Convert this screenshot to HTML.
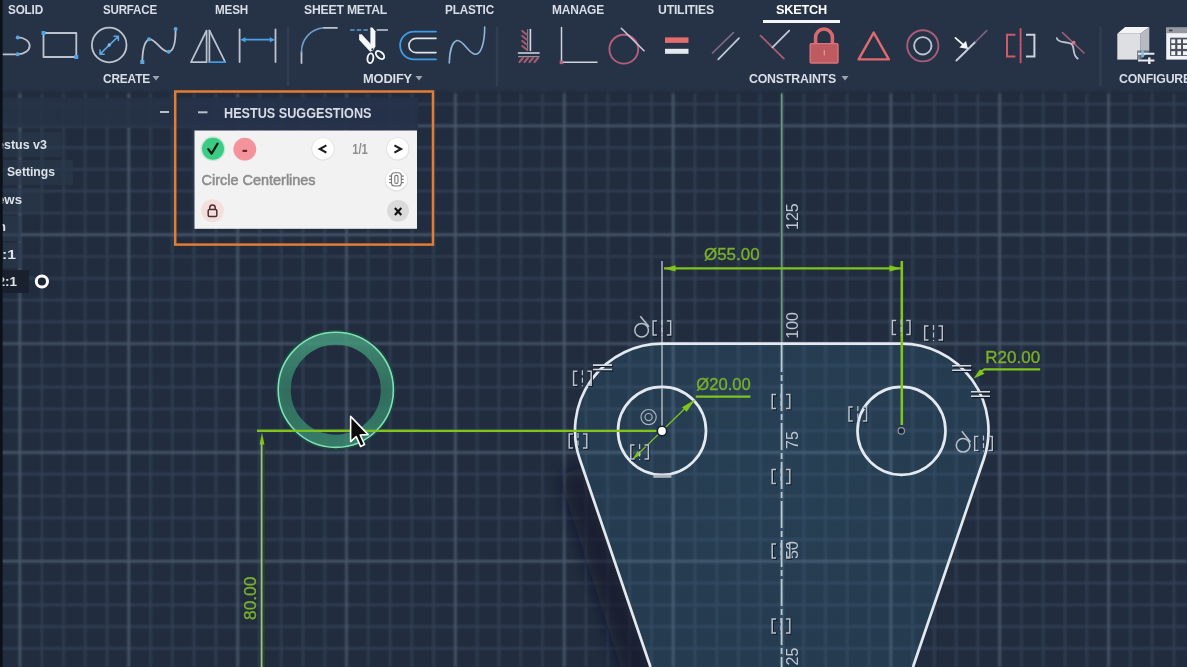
<!DOCTYPE html>
<html><head><meta charset="utf-8">
<style>
html,body{margin:0;padding:0;background:#212d3e;overflow:hidden}
body{width:1187px;height:667px;position:relative;font-family:"Liberation Sans",sans-serif}
svg{position:absolute;left:0;top:0;filter:blur(0.45px)}
.gm{stroke:#313f54;stroke-width:2.2}
.gM{stroke:#4a586d;stroke-width:2.4}
text{font-family:"Liberation Sans",sans-serif}
.tab{font-size:13.2px;font-weight:bold;fill:#d9dee6;letter-spacing:-0.2px}
.grp{font-size:13.2px;font-weight:bold;fill:#d9dee6;letter-spacing:-0.2px}
</style></head><body>
<svg width="1187" height="667" viewBox="0 0 1187 667">
<defs>
<radialGradient id="shapeg" gradientUnits="userSpaceOnUse" cx="782" cy="470" r="330">
<stop offset="0" stop-color="#3b7e9e" stop-opacity="0.23"/><stop offset="1" stop-color="#36799a" stop-opacity="0.16"/>
</radialGradient>
<filter id="b1" filterUnits="userSpaceOnUse" x="0" y="0" width="1187" height="667"><feGaussianBlur stdDeviation="0.85"/></filter>

<g id="gsym">
<g fill="none" stroke="#111a26" stroke-width="1.4" transform="translate(1,1)"><path d="M-5 -7 L-8.8 -7 L-8.8 7 L-5 7 M5 -7 L8.8 -7 L8.8 7 L5 7"/></g>
<g fill="none" stroke="#b9c0ca" stroke-width="1.5"><path d="M-5 -7 L-8.8 -7 L-8.8 7 L-5 7 M5 -7 L8.8 -7 L8.8 7 L5 7"/><path d="M0 -8 L0 8" stroke-dasharray="5 2.5" stroke-width="1.2"/></g>
</g>
<g id="geq">
<g fill="none" stroke="#111a26" stroke-width="1.6" transform="translate(1,1.2)"><path d="M-9.5 -2.2 L9.5 -2.2 M-9.5 2.2 L9.5 2.2"/></g>
<g fill="none" stroke="#d5dae1" stroke-width="1.6"><path d="M-9.5 -2.2 L9.5 -2.2 M-9.5 2.2 L9.5 2.2"/></g>
</g>
<g id="gtan" fill="none" stroke="#b9c0ca" stroke-width="1.5">
<circle cx="0" cy="0" r="6.8"/><path d="M-1.3 -14 L7.4 -3.4"/>
</g>
<linearGradient id="ringg" gradientUnits="userSpaceOnUse" x1="0" y1="331" x2="0" y2="448"><stop offset="0" stop-color="#4aa684"/><stop offset="0.5" stop-color="#357f66"/><stop offset="1" stop-color="#3c9374"/></linearGradient>
<linearGradient id="tbfade" x1="0" y1="0" x2="0" y2="1"><stop offset="0" stop-color="#263347"/><stop offset="0.5" stop-color="#222e42" stop-opacity="0.8"/><stop offset="1" stop-color="#1c2636" stop-opacity="0"/></linearGradient>
<linearGradient id="shl" gradientUnits="userSpaceOnUse" x1="615" y1="563" x2="571.4" y2="577.8"><stop offset="0" stop-color="#121a26" stop-opacity="0.55"/><stop offset="0.5" stop-color="#121a26" stop-opacity="0.3"/><stop offset="1" stop-color="#121a26" stop-opacity="0"/></linearGradient>
<filter id="b4" filterUnits="userSpaceOnUse" x="460" y="380" width="260" height="360"><feGaussianBlur stdDeviation="9"/></filter>
<clipPath id="shclip"><path d="M575 431 L579.64 458.74 L650.5 667 L400 667 L400 400 L575 400 Z"/></clipPath>
</defs>
<rect x="0" y="0" width="1187" height="667" fill="#212d3e"/>
<!-- shape fill -->
<g id="grid" filter="url(#b1)">
<line x1="-1.8" y1="88" x2="-1.8" y2="667" class="gm"/>
<line x1="41.7" y1="88" x2="41.7" y2="667" class="gm"/>
<line x1="63.5" y1="88" x2="63.5" y2="667" class="gm"/>
<line x1="85.3" y1="88" x2="85.3" y2="667" class="gm"/>
<line x1="107.0" y1="88" x2="107.0" y2="667" class="gm"/>
<line x1="150.6" y1="88" x2="150.6" y2="667" class="gm"/>
<line x1="172.3" y1="88" x2="172.3" y2="667" class="gm"/>
<line x1="194.1" y1="88" x2="194.1" y2="667" class="gm"/>
<line x1="215.9" y1="88" x2="215.9" y2="667" class="gm"/>
<line x1="259.4" y1="88" x2="259.4" y2="667" class="gm"/>
<line x1="281.2" y1="88" x2="281.2" y2="667" class="gm"/>
<line x1="303.0" y1="88" x2="303.0" y2="667" class="gm"/>
<line x1="324.8" y1="88" x2="324.8" y2="667" class="gm"/>
<line x1="368.3" y1="88" x2="368.3" y2="667" class="gm"/>
<line x1="390.1" y1="88" x2="390.1" y2="667" class="gm"/>
<line x1="411.8" y1="88" x2="411.8" y2="667" class="gm"/>
<line x1="433.6" y1="88" x2="433.6" y2="667" class="gm"/>
<line x1="477.2" y1="88" x2="477.2" y2="667" class="gm"/>
<line x1="498.9" y1="88" x2="498.9" y2="667" class="gm"/>
<line x1="520.7" y1="88" x2="520.7" y2="667" class="gm"/>
<line x1="542.5" y1="88" x2="542.5" y2="667" class="gm"/>
<line x1="586.0" y1="88" x2="586.0" y2="667" class="gm"/>
<line x1="607.8" y1="88" x2="607.8" y2="667" class="gm"/>
<line x1="629.6" y1="88" x2="629.6" y2="667" class="gm"/>
<line x1="651.4" y1="88" x2="651.4" y2="667" class="gm"/>
<line x1="694.9" y1="88" x2="694.9" y2="667" class="gm"/>
<line x1="716.7" y1="88" x2="716.7" y2="667" class="gm"/>
<line x1="738.4" y1="88" x2="738.4" y2="667" class="gm"/>
<line x1="760.2" y1="88" x2="760.2" y2="667" class="gm"/>
<line x1="803.8" y1="88" x2="803.8" y2="667" class="gm"/>
<line x1="825.5" y1="88" x2="825.5" y2="667" class="gm"/>
<line x1="847.3" y1="88" x2="847.3" y2="667" class="gm"/>
<line x1="869.1" y1="88" x2="869.1" y2="667" class="gm"/>
<line x1="912.6" y1="88" x2="912.6" y2="667" class="gm"/>
<line x1="934.4" y1="88" x2="934.4" y2="667" class="gm"/>
<line x1="956.2" y1="88" x2="956.2" y2="667" class="gm"/>
<line x1="977.9" y1="88" x2="977.9" y2="667" class="gm"/>
<line x1="1021.5" y1="88" x2="1021.5" y2="667" class="gm"/>
<line x1="1043.3" y1="88" x2="1043.3" y2="667" class="gm"/>
<line x1="1065.0" y1="88" x2="1065.0" y2="667" class="gm"/>
<line x1="1086.8" y1="88" x2="1086.8" y2="667" class="gm"/>
<line x1="1130.4" y1="88" x2="1130.4" y2="667" class="gm"/>
<line x1="1152.1" y1="88" x2="1152.1" y2="667" class="gm"/>
<line x1="1173.9" y1="88" x2="1173.9" y2="667" class="gm"/>
<line x1="0" y1="104.1" x2="1187" y2="104.1" class="gm"/>
<line x1="0" y1="147.6" x2="1187" y2="147.6" class="gm"/>
<line x1="0" y1="169.4" x2="1187" y2="169.4" class="gm"/>
<line x1="0" y1="191.2" x2="1187" y2="191.2" class="gm"/>
<line x1="0" y1="213.0" x2="1187" y2="213.0" class="gm"/>
<line x1="0" y1="256.5" x2="1187" y2="256.5" class="gm"/>
<line x1="0" y1="278.3" x2="1187" y2="278.3" class="gm"/>
<line x1="0" y1="300.1" x2="1187" y2="300.1" class="gm"/>
<line x1="0" y1="321.8" x2="1187" y2="321.8" class="gm"/>
<line x1="0" y1="365.4" x2="1187" y2="365.4" class="gm"/>
<line x1="0" y1="387.1" x2="1187" y2="387.1" class="gm"/>
<line x1="0" y1="408.9" x2="1187" y2="408.9" class="gm"/>
<line x1="0" y1="430.7" x2="1187" y2="430.7" class="gm"/>
<line x1="0" y1="474.2" x2="1187" y2="474.2" class="gm"/>
<line x1="0" y1="496.0" x2="1187" y2="496.0" class="gm"/>
<line x1="0" y1="517.8" x2="1187" y2="517.8" class="gm"/>
<line x1="0" y1="539.6" x2="1187" y2="539.6" class="gm"/>
<line x1="0" y1="583.1" x2="1187" y2="583.1" class="gm"/>
<line x1="0" y1="604.9" x2="1187" y2="604.9" class="gm"/>
<line x1="0" y1="626.6" x2="1187" y2="626.6" class="gm"/>
<line x1="0" y1="648.4" x2="1187" y2="648.4" class="gm"/>
<line x1="19.9" y1="88" x2="19.9" y2="667" class="gM"/>
<line x1="128.8" y1="88" x2="128.8" y2="667" class="gM"/>
<line x1="237.7" y1="88" x2="237.7" y2="667" class="gM"/>
<line x1="346.5" y1="88" x2="346.5" y2="667" class="gM"/>
<line x1="455.4" y1="88" x2="455.4" y2="667" class="gM"/>
<line x1="564.3" y1="88" x2="564.3" y2="667" class="gM"/>
<line x1="673.1" y1="88" x2="673.1" y2="667" class="gM"/>
<line x1="782.0" y1="88" x2="782.0" y2="667" class="gM"/>
<line x1="890.9" y1="88" x2="890.9" y2="667" class="gM"/>
<line x1="999.7" y1="88" x2="999.7" y2="667" class="gM"/>
<line x1="1108.6" y1="88" x2="1108.6" y2="667" class="gM"/>
<line x1="0" y1="125.9" x2="1187" y2="125.9" class="gM"/>
<line x1="0" y1="234.7" x2="1187" y2="234.7" class="gM"/>
<line x1="0" y1="343.6" x2="1187" y2="343.6" class="gM"/>
<line x1="0" y1="452.5" x2="1187" y2="452.5" class="gM"/>
<line x1="0" y1="561.3" x2="1187" y2="561.3" class="gM"/>
</g>
<path id="shape" d="M662 343.7 L901.5 343.7 A87 87 0 0 1 984 458.5 L913.5 667 L651 667 L579.4 458.5 A87 87 0 0 1 662 343.7 Z" fill="url(#shapeg)"/>

<g clip-path="url(#shclip)"><path d="M584 462 L662 690 L628 690 L560 478 Z" fill="#0f1622" fill-opacity="0.62" filter="url(#b4)"/></g>
<!-- axis -->
<line x1="780.8" y1="93" x2="780.8" y2="343" stroke="#2a5a3c" stroke-width="1.2"/>
<line x1="781.8" y1="93" x2="781.8" y2="343" stroke="#86b292" stroke-width="1.1"/>
<line x1="781.6" y1="345" x2="781.6" y2="667" stroke="#b9ccd2" stroke-width="1.8" stroke-dasharray="27 3 6 3"/>
<!-- axis labels -->
<g font-size="16px" fill="#c0c6cf" text-anchor="middle">
<text transform="translate(798.4 216.6) rotate(-90)">125</text>
<text transform="translate(798.4 325.4) rotate(-90)">100</text>
<text transform="translate(798.4 440) rotate(-90)">75</text>
<text transform="translate(798.4 550) rotate(-90)">50</text>
<text transform="translate(798.4 656.5) rotate(-90)">25</text>
</g>
<!-- extension line left white -->
<line x1="662" y1="261" x2="662" y2="431" stroke="#cfd6de" stroke-width="1.2"/>
<!-- outline -->
<path d="M650.5 667 L579.64 458.74 A87 87 0 0 1 662 343.7 L901.5 343.7 A87 87 0 0 1 983.86 458.74 L913 667" fill="none" stroke="#e4e9f0" stroke-width="2.7"/>
<circle cx="662" cy="430.8" r="44" fill="none" stroke="#e4e9f0" stroke-width="2.7"/>
<circle cx="901.5" cy="430.8" r="44" fill="none" stroke="#e4e9f0" stroke-width="2.7"/>
<!-- green dims -->
<g stroke="#80c41c" fill="none">
<line x1="257" y1="430.8" x2="657" y2="430.8" stroke-width="2.2"/>
<line x1="263.6" y1="444" x2="263.6" y2="667" stroke="#2f4d22" stroke-width="2.6" stroke-opacity="0.65"/><line x1="261.6" y1="440" x2="261.6" y2="667" stroke="#a2c383" stroke-width="1.8"/>
<line x1="664" y1="268.4" x2="901" y2="268.4" stroke-width="2.4"/>
<line x1="901.8" y1="261" x2="901.8" y2="425" stroke-width="2.6"/>
<line x1="695.8" y1="396.6" x2="750.5" y2="396.6" stroke-width="2.4"/>
<line x1="984" y1="369.3" x2="1040.2" y2="369.3" stroke-width="2.2"/>
<line x1="633.4" y1="458.6" x2="688" y2="405.5" stroke-width="1.3"/>
<line x1="984" y1="369.3" x2="979" y2="373.5" stroke-width="2"/>
</g>
<g fill="#80c41c" stroke="none">
<path d="M262 432.6 L259.6 444.5 L264.4 444.5 Z"/>
<path d="M664 268.4 L675.5 265.2 L675.5 271.6 Z"/>
<path d="M901 268.4 L889.5 265.2 L889.5 271.6 Z"/>
<path d="M695.6 399.2 L682 407.2 L686.6 411.8 Z"/>
<path d="M632.8 459.2 L641.2 454.6 L637.6 451 Z"/>
<path d="M973.6 378.6 L984.6 373.8 L980 369.2 Z"/>
</g>
<g font-size="16.8px" fill="#7ab02a" stroke="#7ab02a" stroke-width="0.35">
<text x="704" y="260.4" textLength="55.6" lengthAdjust="spacingAndGlyphs">Ø55.00</text>
<text x="696.3" y="390.2" textLength="54.4" lengthAdjust="spacingAndGlyphs">Ø20.00</text>
<text x="985.3" y="363.2" textLength="54.8" lengthAdjust="spacingAndGlyphs">R20.00</text>
<text transform="translate(255.6 598.3) rotate(-90)" text-anchor="middle" font-size="16.8px" textLength="43.4" lengthAdjust="spacingAndGlyphs">80.00</text>
</g>
<!-- center points -->
<circle cx="662" cy="431" r="5.6" fill="#16202e"/>
<circle cx="662" cy="431" r="3.9" fill="#ffffff"/>
<circle cx="901.3" cy="430.9" r="3.2" fill="#1b2532" stroke="#8e98a6" stroke-width="1.2"/>
<!-- glyphs -->
<use href="#gsym" x="661.9" y="328"/><use href="#gtan" x="641.6" y="330.2"/>
<use href="#gsym" x="901.2" y="327.4"/><use href="#gsym" x="933.5" y="333"/>
<use href="#gsym" x="582.4" y="378.2"/><use href="#geq" x="602.5" y="367.3"/>
<use href="#gsym" x="781" y="401.5"/><use href="#gsym" x="857.8" y="414"/>
<use href="#gsym" x="578" y="441"/><use href="#gsym" x="639.6" y="452"/>
<use href="#gsym" x="781" y="476.5"/><use href="#gsym" x="781" y="551"/><use href="#gsym" x="781" y="626"/>
<use href="#gsym" x="983.5" y="443.4"/><use href="#gtan" x="963.1" y="445.3"/>
<use href="#geq" x="961.7" y="368"/><use href="#geq" x="980.5" y="394"/>
<line x1="653.3" y1="476.3" x2="671.4" y2="476.3" stroke="#aeb5be" stroke-width="3"/>
<g fill="none" stroke="#aab2bd" stroke-width="1.2"><circle cx="648.6" cy="417.1" r="7.6"/><circle cx="648.6" cy="417.1" r="3.6"/></g>
<!-- preview ring -->
<circle cx="335.8" cy="389.8" r="59.3" fill="none" stroke="#1d4a40" stroke-width="1.6" stroke-opacity="0.8"/>
<circle cx="335.8" cy="389.8" r="51.5" fill="none" stroke="url(#ringg)" stroke-width="13" stroke-opacity="0.78"/>
<circle cx="335.8" cy="389.8" r="57.6" fill="none" stroke="#7fe0b6" stroke-width="1.6"/>
<line x1="257" y1="430.8" x2="420" y2="430.8" stroke="#80c41c" stroke-width="2.2" stroke-opacity="0.85"/>
<!-- cursor -->
<path d="M350.6 416.4 L350.6 441.6 L356.2 436.6 L360.6 446.4 L364.6 444.6 L360.2 435 L368.2 434.6 Z" fill="#0a0a0a" stroke="#ffffff" stroke-width="1.6" stroke-linejoin="round"/>

<!-- toolbar -->
<rect x="0" y="0" width="1187" height="89" fill="#263347"/><rect x="0" y="89" width="1187" height="6" fill="url(#tbfade)"/>

<!-- tab labels -->
<g class="tab">
<text x="8" y="14" textLength="35" lengthAdjust="spacingAndGlyphs">SOLID</text>
<text x="103" y="14" textLength="54" lengthAdjust="spacingAndGlyphs">SURFACE</text>
<text x="215" y="14" textLength="33" lengthAdjust="spacingAndGlyphs">MESH</text>
<text x="304" y="14" textLength="83" lengthAdjust="spacingAndGlyphs">SHEET METAL</text>
<text x="445" y="14" textLength="49" lengthAdjust="spacingAndGlyphs">PLASTIC</text>
<text x="552" y="14" textLength="52" lengthAdjust="spacingAndGlyphs">MANAGE</text>
<text x="658" y="14" textLength="56" lengthAdjust="spacingAndGlyphs">UTILITIES</text>
<text x="776" y="14" textLength="51" lengthAdjust="spacingAndGlyphs" fill="#ffffff">SKETCH</text>
</g>
<rect x="763" y="20" width="77" height="3" fill="#f4f6f8"/>
<g class="grp">
<text x="103" y="83" textLength="47" lengthAdjust="spacingAndGlyphs">CREATE</text>
<text x="363" y="83" textLength="49" lengthAdjust="spacingAndGlyphs">MODIFY</text>
<text x="749" y="83" textLength="87" lengthAdjust="spacingAndGlyphs">CONSTRAINTS</text>
<text x="1119" y="83" textLength="72" lengthAdjust="spacingAndGlyphs">CONFIGURE</text>
</g>
<g fill="#9aa3af">
<path d="M152.5 76 L159.5 76 L156 80.5 Z"/>
<path d="M415.5 76 L422.5 76 L419 80.5 Z"/>
<path d="M841.5 76 L848.5 76 L845 80.5 Z"/>
</g>
<g stroke="#303e54" stroke-width="2.4">
<line x1="288" y1="27" x2="288" y2="86"/>
<line x1="497" y1="27" x2="497" y2="86"/>
<line x1="1100.5" y1="27" x2="1100.5" y2="86"/>
</g>

<g id="icons" fill="none" stroke-linecap="round" stroke-linejoin="round">
<!-- 1 line/arc -->
<path d="M3 54.3 L17.7 54.3 A12 8.45 0 0 0 17.7 37.4" stroke="#bcc3ce" stroke-width="1.8"/>
<circle cx="17.7" cy="37.4" r="2" fill="#5aa7e0" stroke="none"/><circle cx="17.7" cy="54.3" r="2" fill="#5aa7e0" stroke="none"/>
<!-- 2 rectangle -->
<rect x="43.5" y="33" width="32.8" height="24" stroke="#bcc3ce" stroke-width="1.8"/>
<rect x="41.5" y="31" width="4" height="4" fill="#4aa3e6" stroke="none"/><rect x="74.3" y="55" width="4" height="4" fill="#4aa3e6" stroke="none"/>
<!-- 3 circle -->
<circle cx="109.2" cy="45" r="17.3" stroke="#bcc3ce" stroke-width="1.8"/>
<path d="M100.5 53.6 L118 36.6 M100 50 L100 54.2 L104.2 54.2 M114 36.2 L118.4 36.2 L118.4 40.4" stroke="#5aa7e0" stroke-width="1.5"/>
<circle cx="109.2" cy="45" r="1.7" fill="#7fbdf0" stroke="none"/>
<!-- 4 spline -->
<path d="M142.3 61 C142.6 50 145 41 149 39.4 C155 37.5 161 52.5 168.8 51.8 C174 51 175.6 40 175.6 29.5" stroke="#bcc3ce" stroke-width="1.8"/>
<g fill="#5aa7e0" stroke="none"><rect x="140.3" y="60" width="4" height="4"/><circle cx="149" cy="39.3" r="2"/><circle cx="168.8" cy="51.8" r="2"/><circle cx="175.6" cy="29" r="2"/></g>
<!-- 5 mirror -->
<path d="M206.6 30.5 L191 62.2 L206.6 62.2 Z" stroke="#bcc3ce" stroke-width="1.7"/>
<path d="M209.4 30.5 L225.2 62.2" stroke="#bcc3ce" stroke-width="1.7"/>
<path d="M209.4 30.5 L209.4 62.2" stroke="#bcc3ce" stroke-width="1.7"/>
<path d="M209.4 62.2 L225.2 62.2" stroke="#3f9be3" stroke-width="1.8"/>
<!-- 6 dimension -->
<path d="M239.6 29.3 L239.6 62 M275.5 29.3 L275.5 62" stroke="#bcc3ce" stroke-width="1.8"/>
<path d="M242 39.7 L273.5 39.7" stroke="#4aa3e6" stroke-width="1.8"/>
<path d="M241 39.7 L245.5 37 L245.5 42.4 Z M274.3 39.7 L269.8 37 L269.8 42.4 Z" fill="#4aa3e6" stroke="none"/>
<!-- 7 fillet -->
<path d="M301.5 63 L301.5 52" stroke="#bcc3ce" stroke-width="1.8"/>
<path d="M301.5 52 A24 24 0 0 1 324 27.8" stroke="#6f9fc8" stroke-width="1.6"/>
<path d="M324 27.8 L337 27.8" stroke="#bcc3ce" stroke-width="1.8"/>
<!-- 8 trim -->
<path d="M350.2 30 L369 30" stroke="#5aa0d4" stroke-width="1.5" stroke-dasharray="4.4 2.2" stroke-linecap="butt"/>
<path d="M377.2 30 L387.4 30" stroke="#c9d0da" stroke-width="1.4"/>
<g stroke="none" fill="#f6f7f9">
<path d="M359.1 34.2 L361.6 34.2 L371.2 44.6 L374.2 49.4 L370.2 51.8 L359.1 39.8 Z"/>
<path d="M370.4 27.4 L372.4 27.4 L375.4 31.2 L375.4 46.4 L372.6 51.2 L370.4 47 Z"/>
</g>
<circle cx="372.4" cy="49.4" r="1.1" fill="#263347" stroke="none"/>
<ellipse cx="370.4" cy="58.2" rx="2.9" ry="4.9" transform="rotate(8 370.4 58.2)" stroke="#f6f7f9" stroke-width="1.9"/>
<ellipse cx="380" cy="55" rx="3" ry="4.9" transform="rotate(-48 380 55)" stroke="#f6f7f9" stroke-width="1.9"/>
<!-- 9 offset -->
<path d="M436 31.6 L414 31.6 A13.9 13.9 0 0 0 414 59.4 L436 59.4" stroke="#3f9be3" stroke-width="1.8"/>
<path d="M436 38.4 L416 38.4 A7.1 7.1 0 0 0 416 52.6 L436 52.6" stroke="#dfe4ea" stroke-width="1.6"/>
<!-- 10 spline -->
<path d="M449.3 63 C449.5 52 452 42 457 40.5 C463 39 469 55 476 54.3 C482 53.5 484.7 40 484.7 27" stroke="#8fb4d6" stroke-width="1.6"/>
<!-- 11 fix -->
<path d="M527.6 29.5 L527.6 50.5" stroke="#8a7a8c" stroke-width="1.2"/><path d="M530.4 29.5 L530.4 50.5" stroke="#d7dce3" stroke-width="1.6"/>
<path d="M518.5 53 L539 53" stroke="#d7dce3" stroke-width="1.6"/><path d="M518.5 56.6 L539 56.6" stroke="#9a8c9c" stroke-width="1.1"/>
<path d="M522.3 31 L526.6 34.5 M522.3 36 L526.6 39.5 M522.3 41 L526.6 44.5 M522.3 46 L526.6 49.5" stroke="#a35a70" stroke-width="2.2"/>
<path d="M519.5 62 L523 58 M524.5 62 L528 58 M529.5 62 L533 58 M534.5 62 L538 58" stroke="#a35a70" stroke-width="2.2"/>
<!-- 12 horiz/vert -->
<path d="M561.5 27.5 L561.5 62.3 L597 62.3" stroke="#cfd4dc" stroke-width="1.5"/>
<rect x="559.7" y="60.5" width="3.6" height="3.6" fill="#c0607e" stroke="none"/>
<!-- 13 tangent -->
<circle cx="623.8" cy="49.2" r="14.4" stroke="#b25f78" stroke-width="1.9"/>
<path d="M621.3 28.3 L644 50.8" stroke="#cdc8d6" stroke-width="1.6"/>
<!-- 14 equal -->
<rect x="665" y="37.4" width="23.5" height="5.5" fill="#e46c6c" stroke="none"/>
<rect x="665" y="48.8" width="23.5" height="5" fill="#e3e8ef" stroke="none"/>
<!-- 15 parallel -->
<path d="M712.5 53 L733.4 32.7" stroke="#806884" stroke-width="1.7"/>
<path d="M718.2 59.3 L739 38.2" stroke="#c6cad8" stroke-width="1.7"/>
<!-- 16 perpendicular -->
<path d="M760.5 35.6 L783.9 58.6" stroke="#ac5c74" stroke-width="1.8"/>
<path d="M772.5 47.3 L789.2 30.6" stroke="#c6cad8" stroke-width="1.7"/>
<!-- 17 lock -->
<path d="M815.6 43 L815.6 37.4 A8.4 8.4 0 0 1 832.4 37.4 L832.4 43" stroke="#d8696e" stroke-width="3.6"/>
<rect x="810.2" y="43.6" width="27.8" height="19.4" rx="1" fill="#be5b61" stroke="#dc7378" stroke-width="1.4"/>
<path d="M824.3 50.5 L824.3 55" stroke="#e89a9a" stroke-width="1.2"/>
<!-- 18 triangle -->
<path d="M873.7 32.6 L858.6 59.4 L888.8 59.4 Z" stroke="#df6a70" stroke-width="2.4"/>
<!-- 19 concentric -->
<circle cx="922.8" cy="45.8" r="15.6" stroke="#a95c78" stroke-width="1.9"/>
<circle cx="922.8" cy="45.8" r="8.7" stroke="#bcc4d0" stroke-width="1.9"/>
<!-- 20 midpoint -->
<path d="M956.4 60.5 L975.3 42" stroke="#c9cedb" stroke-width="1.9"/>
<path d="M975.3 42 L986.7 30.6" stroke="#7d6480" stroke-width="1.5"/>
<path d="M955.4 37.8 L963.5 45" stroke="#f3f5f7" stroke-width="1.7"/>
<path d="M968 49 L959.4 47.6 L966 41 Z" fill="#f3f5f7" stroke="none"/>
<!-- 21 symmetric -->
<path d="M1015.4 34.7 L1007 34.7 L1007 56.6 L1015.4 56.6" stroke="#cf5966" stroke-width="2" stroke-linecap="butt" stroke-linejoin="miter"/>
<path d="M1020.6 29 L1020.6 62.4" stroke="#c9566a" stroke-width="1.9" stroke-dasharray="13 1.4 2.4 1.4"/>
<path d="M1026 34.7 L1034.4 34.7 L1034.4 56.6 L1026 56.6" stroke="#cdd2dc" stroke-width="2" stroke-linecap="butt" stroke-linejoin="miter"/>
<!-- 22 curvature -->
<path d="M1056.8 38.2 C1058.5 43.5 1066 41.2 1071 43.8 C1075.4 46 1071.6 55 1077.7 58.6" stroke="#bcc4d0" stroke-width="1.8"/>
<path d="M1062.5 32.7 L1084 53" stroke="#9c5e78" stroke-width="1.6"/>
<circle cx="1073.6" cy="42.6" r="1.9" fill="#d9788c" stroke="none"/>
<!-- 23 cube -->
<g stroke="none">
<path d="M1117.3 33.8 L1125.1 27 L1149.3 27 L1140.3 33.8 Z" fill="#f3f4f6"/>
<path d="M1140.3 33.8 L1149.3 27 L1149.3 52 L1140.3 59.6 Z" fill="#b7bac0"/>
<path d="M1117.3 33.8 L1140.3 33.8 L1140.3 59.6 L1117.3 59.6 Z" fill="#dddfe3"/>
<rect x="1137" y="50.5" width="18" height="13" fill="#263347" fill-opacity="0.55"/>
</g>
<path d="M1138 53.8 L1154.4 53.8 M1138 60.5 L1154.4 60.5" stroke="#e8ebef" stroke-width="1.9" stroke-linecap="butt"/>
<path d="M1142.6 50.4 L1142.6 57.2" stroke="#7fbde8" stroke-width="2.4" stroke-linecap="butt"/>
<path d="M1149.3 57.4 L1149.3 64" stroke="#e8ebef" stroke-width="2.4" stroke-linecap="butt"/>
<!-- 24 table -->
<g stroke="none">
<rect x="1166.2" y="27.6" width="22" height="32" fill="#f1f2f4"/>
<rect x="1166.2" y="27.6" width="22" height="5.6" fill="#96999f"/>
<rect x="1169" y="29.6" width="3.4" height="1.7" fill="#3a3f49"/>
<rect x="1170.1" y="37.7" width="18" height="18.2" fill="#4a505c"/>
<g fill="#f4f5f7"><rect x="1171.3" y="39.4" width="3.9" height="3.9"/><rect x="1177.4" y="39.4" width="3.6" height="3.9"/><rect x="1183" y="39.4" width="4" height="3.9"/>
<rect x="1171.3" y="45" width="3.9" height="3.9"/><rect x="1177.4" y="45" width="3.6" height="3.9"/><rect x="1183" y="45" width="4" height="3.9"/>
<rect x="1171.3" y="51.2" width="3.9" height="3.9"/><rect x="1177.4" y="51.2" width="3.6" height="3.9"/><rect x="1183" y="51.2" width="4" height="3.9"/></g>
</g>
</g>


<!-- browser header strip -->
<rect x="2.6" y="98" width="190" height="29.6" fill="#253247" fill-opacity="0.88"/>
<rect x="160" y="111" width="9" height="2" fill="#b8c0cc"/>
<!-- left labels -->
<g fill="#2a384d" fill-opacity="0.6">
<rect x="3" y="132" width="58" height="25"/>
<rect x="3" y="160" width="70" height="25"/>
<rect x="3" y="188" width="38" height="25"/>
<rect x="3" y="216" width="18" height="25"/>
<rect x="3" y="243" width="20" height="25"/>
</g>
<rect x="3" y="270" width="26" height="23" fill="#19212f"/>
<g font-size="13.5px" font-weight="bold" fill="#dde2e8">
<text x="-3" y="149" textLength="50" lengthAdjust="spacingAndGlyphs">estus v3</text>
<text x="7" y="176" textLength="48" lengthAdjust="spacingAndGlyphs">Settings</text>
<text x="-3" y="204" textLength="25" lengthAdjust="spacingAndGlyphs">ews</text>
<text x="-2.2" y="231">n</text>
<text x="2" y="259" textLength="14" lengthAdjust="spacingAndGlyphs">:1</text>
<text x="-2.6" y="286" textLength="19.6" lengthAdjust="spacingAndGlyphs">2:1</text>
</g>
<circle cx="41.9" cy="281.5" r="5.6" fill="#1c2636" stroke="#ffffff" stroke-width="3"/>
<!-- hestus panel -->
<rect x="175.2" y="91.5" width="257.8" height="153.1" fill="none" stroke="#e57c32" stroke-width="2.5"/>
<rect x="191.5" y="97.4" width="226.5" height="33" rx="2.5" fill="#25324a" fill-opacity="0.94"/>
<rect x="198" y="111.3" width="9.5" height="2" fill="#b8c0cc"/>
<text x="224" y="118.4" font-size="14.5px" font-weight="bold" fill="#d7dce5" textLength="147.5" lengthAdjust="spacingAndGlyphs">HESTUS SUGGESTIONS</text>
<rect x="194.5" y="130.5" width="222.5" height="98.3" fill="#f2f2f2"/>
<!-- row 1 -->
<circle cx="213" cy="148.7" r="12.4" fill="#3ecf8e" fill-opacity="0.25"/>
<circle cx="213" cy="148.7" r="11" fill="#3ccb85"/>
<path d="M208.3 149.2 L211.6 153.6 L217.6 143.6" fill="none" stroke="#0b1a10" stroke-width="2.2" stroke-linecap="round" stroke-linejoin="round"/>
<circle cx="244.8" cy="149.2" r="11.4" fill="#f3939b"/>
<rect x="242.5" y="149.8" width="4.6" height="2.2" fill="#6a262e"/>
<circle cx="323" cy="149" r="11.8" fill="#000" fill-opacity="0.06"/>
<circle cx="323" cy="148.8" r="10.7" fill="#ffffff"/>
<path d="M326.4 145.4 L319.8 149 L326.4 152.6" fill="none" stroke="#1c1c1c" stroke-width="2.1"/>
<text x="352.2" y="154" font-size="13.8px" font-weight="bold" fill="#8e8e8e" textLength="15.6" lengthAdjust="spacingAndGlyphs">1/1</text>
<circle cx="397.8" cy="149" r="11.8" fill="#000" fill-opacity="0.06"/>
<circle cx="397.7" cy="148.8" r="10.7" fill="#ffffff"/>
<path d="M394.4 145.4 L401 149 L394.4 152.6" fill="none" stroke="#1c1c1c" stroke-width="2.1"/>
<!-- row 2 -->
<text x="201.6" y="185.1" font-size="14.5px" fill="#8c8c8c" stroke="#8c8c8c" stroke-width="0.55" textLength="114" lengthAdjust="spacingAndGlyphs">Circle Centerlines</text>
<circle cx="396.5" cy="180" r="11.8" fill="#000" fill-opacity="0.06"/>
<circle cx="396.4" cy="179.5" r="10.7" fill="#ffffff"/>
<g fill="none" stroke="#777" stroke-width="1.1" transform="translate(-0.1 -0.4)">
<rect x="391.6" y="173.2" width="9.8" height="13.2" rx="3"/>
<rect x="394.9" y="175.8" width="3.2" height="8" rx="1.4"/>
<path d="M389.2 176.5 L391.4 176.5 M389.2 179.8 L391.4 179.8 M389.2 183 L391.4 183 M401.6 176.5 L403.8 176.5 M401.6 179.8 L403.8 179.8 M401.6 183 L403.8 183"/>
</g>
<!-- row 3 -->
<circle cx="212.5" cy="210.6" r="11.4" fill="#f5dede"/>
<rect x="208.2" y="209.6" width="8.6" height="6.8" rx="1.2" fill="none" stroke="#4a2f33" stroke-width="1.5"/>
<path d="M209.8 209.4 L209.8 207.6 A2.7 2.7 0 0 1 215.2 207.6 L215.2 209.4" fill="none" stroke="#4a2f33" stroke-width="1.5"/>
<circle cx="398" cy="210.8" r="10.9" fill="#dadada"/>
<path d="M394.9 208 L401.3 215 M401.3 208 L394.9 215" stroke="#111" stroke-width="2.1"/>
<rect x="0" y="0" width="2.6" height="667" fill="#0c1017"/>
</svg>
</body></html>
